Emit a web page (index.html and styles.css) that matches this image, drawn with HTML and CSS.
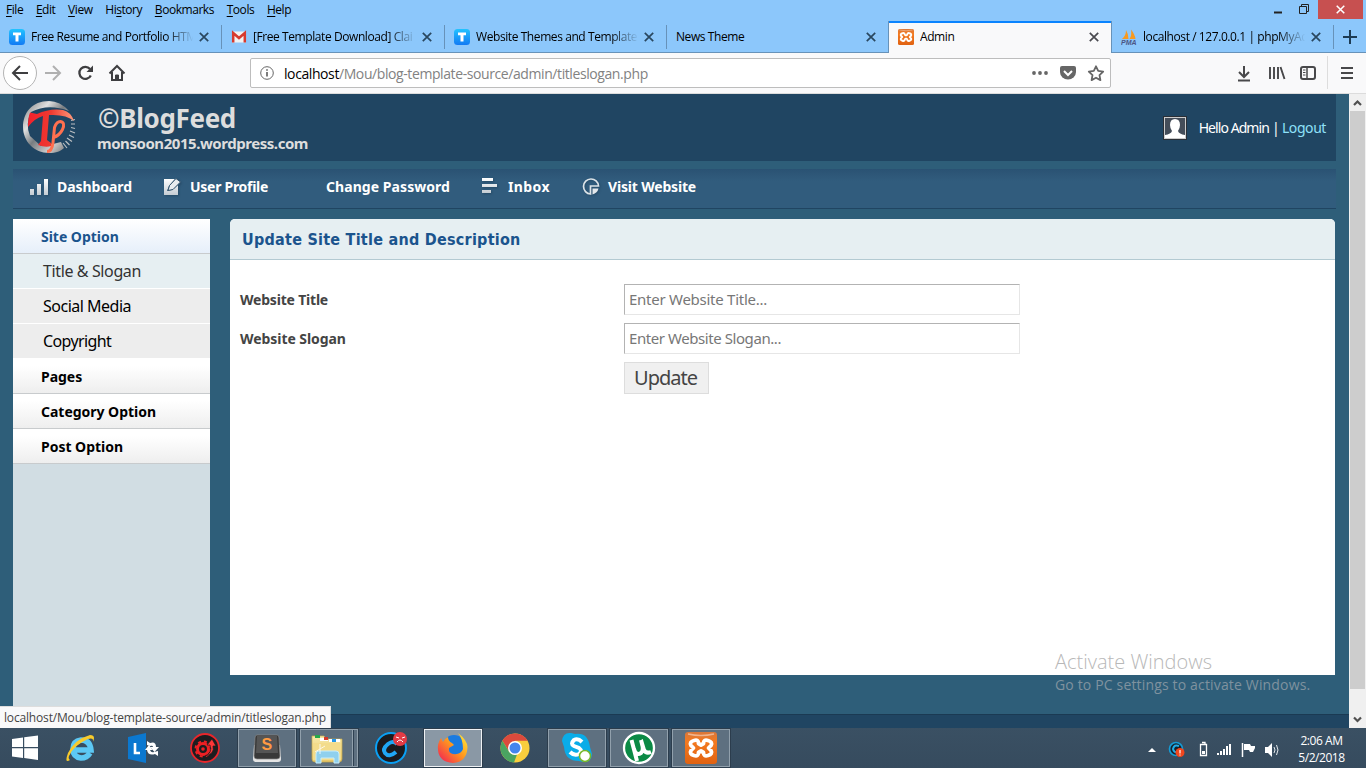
FILE: index.html
```html
<!DOCTYPE html>
<html lang="en">
<head>
<meta charset="utf-8">
<title>Admin</title>
<link rel="stylesheet" href="styles.css">
</head>
<body>
<svg class="defs" width="0" height="0">
  <defs>
    <linearGradient id="cyan" x1="0" y1="0" x2="0" y2="1"><stop offset="0" stop-color="#22c3ff"/><stop offset="1" stop-color="#127af4"/></linearGradient>
    <linearGradient id="steel" x1="0" y1="0" x2="1" y2="1"><stop offset="0" stop-color="#777"/><stop offset=".3" stop-color="#e0e0e0"/><stop offset=".5" stop-color="#777c80"/><stop offset=".75" stop-color="#ccc"/><stop offset="1" stop-color="#666"/></linearGradient>
    <linearGradient id="red" x1="0" y1="0" x2="1" y2="0"><stop offset="0" stop-color="#f3202c"/><stop offset=".5" stop-color="#ee3a30"/><stop offset="1" stop-color="#ff9a7c"/></linearGradient>
    <linearGradient id="pale" x1="0" y1="0" x2="0" y2="1"><stop offset="0" stop-color="#fff"/><stop offset="1" stop-color="#c4ccd3"/></linearGradient>
    <linearGradient id="xo" x1="0" y1="0" x2="0" y2="1"><stop offset="0" stop-color="#d9773a"/><stop offset=".3" stop-color="#f47a20"/><stop offset="1" stop-color="#e06212"/></linearGradient>
    <linearGradient id="folder" x1="0" y1="0" x2="0" y2="1"><stop offset="0" stop-color="#f8eaa8"/><stop offset="1" stop-color="#e5c568"/></linearGradient>
    <linearGradient id="fire" x1="1" y1="0" x2="0" y2="1"><stop offset="0" stop-color="#fff33c"/><stop offset=".45" stop-color="#ff9a1e"/><stop offset="1" stop-color="#f0145a"/></linearGradient>
    <symbol id="x" viewBox="0 0 10 10"><path d="M.8.8l8.400 8.400M9.200.8L.8 9.200" stroke="currentColor" stroke-width="1.700" fill="none"/></symbol>
    <symbol id="t" viewBox="0 0 16 16"><rect width="16" height="16" rx="3.500" fill="url(#cyan)"/><path d="M4 3.500h8v2.700H9.500v6.300h-3V6.200H4z" fill="#fff"/></symbol>
    <symbol id="xampp" viewBox="0 0 32 32"><rect width="32" height="32" rx="3" fill="url(#xo)"/><path d="M3 2q13 3 26 0" stroke="#efb48e" stroke-width="1.500" fill="none"/><path d="M9 8.500Q13.500 7 13.500 11.500L16 13l2.500-1.500Q18.500 7 23 8.500 28 10 26 13.500L23.500 16l2.500 2.500Q28 22 23 23.500 18.500 25 18.500 20.500L16 19l-2.500 1.500Q13.500 25 9 23.500 4 22 6 18.500L8.500 16 6 13.500Q4 10 9 8.500z" fill="none" stroke="#fff" stroke-width="3.800" stroke-linejoin="round"/></symbol>
  </defs>
</svg>

<header class="menubar">
  <nav class="menus"><span><u>F</u>ile</span><span><u>E</u>dit</span><span><u>V</u>iew</span><span>Hi<u>s</u>tory</span><span><u>B</u>ookmarks</span><span><u>T</u>ools</span><span><u>H</u>elp</span></nav>
  <div class="win">
    <svg width="50" height="20"><path d="M6 12.500h8" stroke="#222" stroke-width="2"/><path d="M31.500 6.500h7v7h-7zM33.500 6V4.500h7v7H39" stroke="#222" fill="none"/></svg>
    <span class="close"><svg width="9" height="9"><use href="#x"/></svg></span>
  </div>
</header>

<div class="tabs">
  <div class="tab t1"><svg width="16" height="16"><use href="#t"/></svg><span class="label">Free Resume and Portfolio HTM</span><svg class="x" width="10" height="10"><use href="#x"/></svg></div>
  <div class="tab t2"><svg width="16" height="16" viewBox="0 0 16 16"><path d="M1 2.500h14v11H1z" fill="#f2f2f2"/><path d="M2.200 13.500V4L8 9l5.800-5v9.500" fill="none" stroke="#d63a2f" stroke-width="2.500"/></svg><span class="label">[Free Template Download] Clai</span><svg class="x" width="10" height="10"><use href="#x"/></svg></div>
  <div class="tab t3"><svg width="16" height="16"><use href="#t"/></svg><span class="label">Website Themes and Template</span><svg class="x" width="10" height="10"><use href="#x"/></svg></div>
  <div class="tab t4"><span class="label">News Theme</span><svg class="x" width="10" height="10"><use href="#x"/></svg></div>
  <div class="tab active"><svg width="16" height="16"><use href="#xampp"/></svg><span class="label">Admin</span><svg class="x" width="10" height="10"><use href="#x"/></svg></div>
  <div class="tab t6"><svg width="16" height="16" viewBox="0 0 16 16"><path d="M1 10Q5 7 5 1q2.500 4 2.500 9zM8.500 10Q11 6 10 .5q4 5 4.500 9.500z" fill="#f79a20"/><text x="0" y="15.500" class="pma">PMA</text></svg><span class="label">localhost / 127.0.0.1 | phpMyAd</span><svg class="x" width="10" height="10"><use href="#x"/></svg></div>
  <div class="plus"><svg width="14" height="14"><path d="M7 0v14M0 7h14" stroke="#1d3b54" stroke-width="2"/></svg></div>
</div>

<div class="toolbar">
  <svg width="135" height="40" fill="none" stroke="#3e3e40" stroke-width="2">
    <circle cx="20" cy="20" r="16.500" fill="#fff" stroke="#b4b4b4" stroke-width="1"/>
    <path d="M28 20H13m7-7-7 7 7 7"/>
    <path d="M45 20h15m-7-7 7 7-7 7" stroke="#b0b0b0"/>
    <path d="M90 16a6 6 0 1 0 .8 6.500" stroke-width="2.300"/><path d="M93 12.500v6.500h-6.500z" fill="#3e3e40" stroke="none"/>
    <path d="M109.500 20.500 117 13l7.500 7.500M112 19v8h10v-8"/><path d="M115.500 27v-5h3v5z" fill="#3e3e40" stroke-width="1"/>
  </svg>
  <div class="url">
    <svg width="14" height="14" fill="none" stroke="#666"><circle cx="7" cy="7" r="6.300"/><path d="M7 6v4.500M7 3.300v1.500" stroke-width="1.700"/></svg>
    <span class="addr"><b>localhost</b>/Mou/blog-template-source/admin/titleslogan.php</span>
    <svg width="75" height="18" viewBox="0 0 75 18"><g fill="#666"><circle cx="3" cy="9" r="1.900"/><circle cx="9" cy="9" r="1.900"/><circle cx="15" cy="9" r="1.900"/><path d="M31 2h12q2 0 2 2v4a8 7.500 0 0 1-16 0V4q0-2 2-2z"/></g><path d="M33 7l4 4 4-4" stroke="#fff" stroke-width="2" fill="none"/><path d="M65 2.300l2.200 4.600 5 .7-3.700 3.500.9 5-4.400-2.400-4.400 2.400.9-5-3.700-3.500 5-.7z" fill="none" stroke="#666" stroke-width="1.800" stroke-linejoin="round"/></svg>
  </div>
  <svg class="tools" width="125" height="40" fill="none" stroke="#48484a" stroke-width="2">
    <path d="M9 13v11m-5-5 5 5 5-5M3 27.500h12"/>
    <path d="M35 14v12M39 14v12M43 14v12M45.500 14l4 12" stroke-width="1.900"/>
    <rect x="66" y="14" width="14" height="12" rx="2"/><path d="M72 14v12" stroke-width="1.500"/><path d="M68 17h2.500M68 19.500h2.500M68 22h2.500" stroke-width="1"/>
    <path d="M92.500 3v33" stroke="#ddd" stroke-width="1"/><path d="M106 15h12M106 20h12M106 25h12"/>
  </svg>
</div>

<div class="view">
  <main class="page">
    <div class="brand">
      <svg width="54" height="54" viewBox="0 0 54 54">
        <path fill-rule="evenodd" fill="url(#steel)" d="M27 1C10 1 1 13 1 27s11 26 26 26c7 0 12-2 15-5l-3-6-8 2-12 2L8 36Q3 24 9 12 26 3 47 11 38 1 27 1z"/>
        <path d="M41 43l4 5M43.500 41l4 4M45 38l5 3.500M47 35l5 2.500M48 31l5 2M49 27.500l4 1M49 24h4M49 20.500l4-1" stroke="#b9bec2" stroke-width="1.200"/>
        <path fill="url(#red)" d="M6 27Q6 17 8 12.500L15 14Q28 8 41 10Q49 12 52 21Q44 14 27 15L25 40L29 43V46Q24 48 16 45L19 41L21 16Q13 18 6 27z"/>
        <path d="M25 51.500q5 0 6-9l1.500-15q2-6 6-6 5 1 2 8-3 6-9 8" fill="none" stroke="#ff704f" stroke-width="3"/>
      </svg>
      <div class="titles"><h1>©BlogFeed</h1><p>monsoon2015.wordpress.com</p></div>
      <div class="user"><svg width="24" height="24"><rect x=".5" y=".5" width="23" height="23" fill="#444d59" stroke="#2a2f36"/><rect x="1.500" y="1.500" width="21" height="21" fill="none" stroke="#ccc"/><path d="M2 22v-3q6-1 7-4-2-3-2-6 0-6 5-6t5 6q0 3-2 6 1 3 7 4v3z" fill="#fff"/></svg><span class="hello">Hello Admin</span><span class="bar">|</span><a>Logout</a></div>
    </div>
    <nav class="nav">
      <span class="n1"><svg width="20" height="20" fill="url(#pale)"><path d="M1 12h4v6H1zM8 7h4v11H8zM15 2h4v16h-4z"/></svg>Dashboard</span>
      <span class="n2"><svg width="20" height="20"><path d="M2 2h11L7 9l-2 5 5-1 6-5v10H2z" fill="url(#pale)"/><path d="M6 13.500l1.500-5L14 1.500l4.500 3.500-7.500 7.500z" fill="#e8ecef" stroke="#34556f"/></svg>User Profile</span>
      <span class="n3">Change Password</span>
      <span class="n4"><svg width="20" height="20" fill="url(#pale)"><path d="M3 1h11v3H3zM3 7h15v3H3zM3 13h9v3H3z"/></svg>Inbox</span>
      <span class="n5"><svg width="20" height="20"><path d="M9.500 17A7.500 7.500 0 1 1 17.500 9H9.500z" fill="none" stroke="#dce3e8" stroke-width="1.700"/><path d="M11.500 11.500h6q-1 4.500-6 6z" fill="#e4e8ec"/></svg>Visit Website</span>
    </nav>
    <div class="columns">
      <aside class="side">
        <div class="head on">Site Option</div>
        <div class="sub hover s1">Title &amp; Slogan</div>
        <div class="sub">Social Media</div>
        <div class="sub s3">Copyright</div>
        <div class="head">Pages</div>
        <div class="head">Category Option</div>
        <div class="head">Post Option</div>
      </aside>
      <section class="box">
        <h2>Update Site Title and Description</h2>
        <form class="form">
          <label class="l1">Website Title</label><input class="i1" placeholder="Enter Website Title...">
          <label>Website Slogan</label><input placeholder="Enter Website Slogan...">
          <button type="button">Update</button>
        </form>
      </section>
    </div>
    <footer class="foot"></footer>
  </main>
  <div class="scroll">
    <svg width="17" height="17"><path d="M5 11l3.500-3.500L12 11" stroke="#505050" stroke-width="2.200" fill="none"/></svg>
    <i class="thumb"></i>
    <svg width="17" height="17"><path d="M5 6.500l3.500 3.500L12 6.500" stroke="#505050" stroke-width="2.200" fill="none"/></svg>
  </div>
  <div class="status">localhost/Mou/blog-template-source/admin/titleslogan.php</div>
  <div class="activate"><p class="a1">Activate Windows</p><p class="a2">Go to PC settings to activate Windows.</p></div>
</div>

<footer class="taskbar">
  <div class="start"><svg width="28" height="26"><path d="M1 4l11-1.600V12H1zM13.200 2.200L27 .4V12H13.200zM1 13.200h11v9.700L1 21.500zM13.200 13.200H27V25l-13.800-1.900z" fill="#fff"/></svg></div>
  <div class="app"><svg width="32" height="32" viewBox="0 0 32 32"><path d="M25 21Q22 26 16 26 8 25 8 17T16 8Q25 8 26 18H9" fill="none" stroke="#5cc8f4" stroke-width="5.500"/><path d="M5 28Q-1 32 3 21 10 7 25 3q6 0 3 7 1-5-5-3Q9 13 4 24q-1 3 1 4z" fill="#f8cb2c"/></svg></div>
  <div class="app"><svg width="32" height="32" viewBox="0 0 32 32"><path d="M1 5l18-4v30L1 27z" fill="#0b78d0"/><path d="M8 11v10h5" stroke="#fff" stroke-width="2.600" fill="none"/><path d="M20 13V9l3 2q6-2 6 4h3l-4.500 5-4.500-5h3q0-2-3-1z" fill="#fff"/><path d="M31 19v5l-3-2q-7 2-8-4h-2l4-5 3.500 5H23q1 3 4 2z" fill="#fff"/></svg></div>
  <div class="app"><svg width="32" height="32" viewBox="0 0 32 32"><circle cx="16" cy="16" r="14" fill="#1d1d20" stroke="#e8262b" stroke-width="1.800"/><circle cx="14" cy="17" r="5.500" fill="none" stroke="#ed2024" stroke-width="3"/><circle cx="14" cy="17" r="7.500" fill="none" stroke="#ed2024" stroke-width="2" stroke-dasharray="3 3"/><circle cx="14" cy="17" r="1.800" fill="#ed2024"/><path d="M16 24q8-3 5-11h-3l5-6 4 7h-3q2 8-8 10z" fill="#ff3637" stroke="#1d1d20" stroke-width=".7"/></svg></div>
  <div class="app open"><svg width="32" height="32" viewBox="0 0 32 32"><path d="M3 13h26l1 14q0 3-3 3H5q-3 0-3-3z" fill="#e5e5e5"/><path d="M6 3h20q2 0 2 3l1 18q0 3-3 3H6q-3 0-3-3L4 6q0-3 2-3z" fill="#393939" stroke="#888" stroke-width=".7"/><path d="M6 4h20l1 17H5z" fill="#555"/><text x="10.500" y="18" class="s">S</text></svg></div>
  <div class="app open stack"><svg width="34" height="32" viewBox="0 0 34 32"><path d="M2 4h12l2 3h16v20q0 3-3 3H5q-3 0-3-3z" fill="url(#folder)" stroke="#c7a94c" stroke-width=".7"/><path d="M5 3h5v3H5z" fill="#25a84b"/><path d="M10 6h8v3h-8z" fill="#fff"/><path d="M14 5h4v3h-4z" fill="#d33a2c"/><path d="M19 7h11v3H19z" fill="#fff"/><path d="M22 7h4v3h-4z" fill="#2497e8"/><path d="M3 11h28v17H3z" fill="#f3dc8b"/><path d="M6 31V22q0-3 3-3h17q3 0 3 3v9h-5v-5H11v5z" fill="#8fd0ed" stroke="#c7edfb"/><path d="M5 20l10-6M10 12v10" stroke="#fff" opacity=".8"/></svg></div>
  <div class="app"><svg width="34" height="34" viewBox="0 0 34 34"><circle cx="17" cy="17" r="15" fill="#1b1c20" stroke="#0aa0f5" stroke-width="2"/><path d="M23 13q-4-4-9 0-6 5-3 9 4 5 11-1" fill="none" stroke="#20a7f5" stroke-width="4"/><circle cx="26" cy="8" r="7" fill="#e33b45"/><path d="M22 6l3 1M28 7l3-1M23 11q3-4 6 0" stroke="#fff" fill="none"/></svg></div>
  <div class="app open focus"><svg width="32" height="32" viewBox="0 0 32 32"><circle cx="17" cy="14" r="11" fill="#1b7be0"/><path d="M21 1q9 7 9.500 14Q30 30 16 31 2 30 1 18 0 12 4 6l2 4q2-4 5-5 0 4 4 6l2 2-5 3q-1 5 4 6 8 1 10-5 0-10-5-16z" fill="url(#fire)"/></svg></div>
  <div class="app"><svg width="30" height="30" viewBox="0 0 30 30"><circle cx="15" cy="15" r="14.500" fill="#f9ce3d"/><path d="M2.400 7.800A14.500 14.500 0 0 1 27.600 7.800H15L9 18.500z" fill="#dc4a3d"/><path d="M2.400 7.800L9 18.500q3 4 8 3L14 29.500A14.500 14.500 0 0 1 2.400 7.800z" fill="#4aa461"/><circle cx="15" cy="15" r="7" fill="#fff"/><circle cx="15" cy="15" r="5.500" fill="#4485ee"/></svg></div>
  <div class="app open"><svg width="32" height="32" viewBox="0 0 32 32"><path d="M10 1q-8-1-9 8l2 6q1 14 15 14 12 4 13-7l-2-7Q27 0 14 2z" fill="#0aace8"/><path d="M21 10q-4-4-8-2-4 4 0 6l5 2q4 3 0 6-5 2-9-2" stroke="#fff" stroke-width="4" fill="none"/><circle cx="24" cy="24" r="5.500" fill="#fff" stroke="#78b82a" stroke-width="1.500"/></svg></div>
  <div class="app open"><svg width="34" height="34" viewBox="0 0 34 34"><circle cx="17" cy="17" r="15" fill="#0b8a45" stroke="#fff" stroke-width="2.300"/><path d="M9.500 9l5.500 21M12 18q2 7 7 4 3-3 1-9l-1-4 3 10q2 4 7 2" stroke="#fff" stroke-width="4" fill="none"/></svg></div>
  <div class="app open"><svg width="32" height="32"><use href="#xampp"/></svg></div>
  <div class="tray">
    <svg width="140" height="24" viewBox="0 0 140 24">
      <path d="M4 15l4-4 4 4z" fill="#fff"/>
      <circle cx="32" cy="12" r="6.500" fill="#16222c" stroke="#159bd5" stroke-width="1.700"/><path d="M35 9q-5-2-6 3 1 4 5 3" stroke="#22abe5" stroke-width="2" fill="none"/><circle cx="36" cy="15.500" r="4.500" fill="#f2461d"/><path d="M36 13v3.500M36 17.500v1" stroke="#fff" stroke-width="1.200"/>
      <path d="M56.500 7.500h6v11h-6zM58 5.500h3v2" fill="none" stroke="#fff" stroke-width="1.300"/><path d="M58 14h3v3h-3z" fill="#fff"/>
      <path d="M73 16h2v2h-2zM76 14h2v4h-2zM79 12h2v6h-2zM82 9h2v9h-2zM85 7h2v11h-2z" fill="#fff"/>
      <path d="M98.500 6v14" stroke="#fff" stroke-width="1.500"/><path d="M100 7h6l1 2h4v2l-2 4h-3l-1-2h-5z" fill="#fff"/>
      <path d="M121 10h3l4-4v14l-4-4h-3z" fill="#fff"/><path d="M130 10q2 3 0 6M132.500 8q3 5 0 10" stroke="#e4e8eb" fill="none"/>
    </svg>
    <div class="clock"><span>2:06 AM</span><span>5/2/2018</span></div>
  </div>
</footer>
</body>
</html>
```
FILE: styles.css
```css
* { box-sizing: border-box; margin: 0; }
body { width: 1366px; height: 768px; overflow: hidden; display: flex; flex-direction: column; font-family: "Open Sans", "Noto Sans", sans-serif; font-size: 12px; color: #000; }
svg { flex: none; display: block; }
.defs { position: absolute; }

.menubar { height: 21px; background: #8cc7fb; display: flex; justify-content: space-between; }
.menus { display: flex; gap: 12.7px; padding-left: 6px; line-height: 19px; letter-spacing: -.45px; }
.menus u { text-underline-offset: 2px; }
.win { display: flex; }
.win .close { width: 45px; height: 19px; margin-right: 3px; background: #c75050; color: #fff; display: flex; align-items: center; justify-content: center; }

.tabs { height: 32px; background: #8cc7fb; display: flex; box-shadow: inset 0 -1px #6792b9; }
.tab { display: flex; align-items: center; padding: 0 13px 0 9px; color: #000; }
.tab::after { content: ""; align-self: center; width: 1px; height: 24px; background: #6792b9; margin: 0 -13px 0 12px; }
.label { flex: 1; width: 0; margin-left: 6px; overflow: hidden; white-space: nowrap; letter-spacing: -.42px; line-height: 20px; margin-right: 4px; }
.tab .x { color: #29475f; }
.t1 { width: 222px; }
.t2 { width: 223px; }
.t3 { width: 222px; }
.t4 { width: 221px; }
.t4 .label { margin-left: 0; }
.t4::after, .active::after { display: none; }
.t4, .active { padding-right: 12px; }
.t1 .label, .t2 .label, .t3 .label, .t6 .label { -webkit-mask-image: linear-gradient(90deg, #000 82%, transparent 99%); mask-image: linear-gradient(90deg, #000 82%, transparent 99%); }
.active { width: 224px; background: #f9f9fa; border: solid #6792b9; border-width: 0 1px; box-shadow: inset 0 2px #0a84ff; }
.active .x { color: #4a4a4f; }
.t6 { width: 222px; }
.pma { font: italic bold 7px "Liberation Sans", sans-serif; fill: #4b5585; }
.plus { flex: 1; display: flex; align-items: center; justify-content: center; }

.toolbar { height: 41px; background: #f9f9fa; border-bottom: 1px solid #dcdcdc; display: flex; }
.url { width: 861px; height: 30px; margin: 5px 0 0 115px; border: 1px solid #bdbdbd; border-radius: 2px; background: #fff; display: flex; align-items: center; padding: 0 4px 0 9px; }
.addr { flex: 1; margin-left: 10px; font-size: 14px; letter-spacing: -.41px; color: #828282; padding-top: 1px; }
.addr b { font-weight: 400; color: #000; }
.tools { margin-left: auto; }
.toolbar .tools { margin-right: 6px; }

.view { height: 634px; display: flex; position: relative; background: #2e5e79; font-family: "Noto Sans", sans-serif; }
.page { width: 1349px; display: flex; flex-direction: column; }
.brand { height: 67px; margin: 0 13px; background: #204562; display: flex; align-items: center; padding: 0 10px 2px 9px; color: #ddd; }
.titles { margin-left: 21px; padding-top: 3px; }
.titles h1 { font-size: 26px; line-height: 30px; letter-spacing: -.35px; padding-left: 1px; }
.titles p { font-size: 15px; font-weight: 700; line-height: 21px; letter-spacing: -.45px; }
.user { margin-left: auto; display: flex; align-items: center; font-size: 14px; color: #fff; padding-top: 2px; }
.hello { margin-left: 12px; letter-spacing: -.93px; }
.bar { margin: 0 3px 0 3px; width: 7px; text-align: center; }
.user a { color: #8fe1f9; letter-spacing: -.42px; }
.nav { height: 40px; margin: 8px 13px 0; background: linear-gradient(#2a5273, #315c7d 12px); border-bottom: 1px solid #204562; display: flex; align-items: center; padding: 0 0 4px 16px; font-size: 14px; font-weight: 700; color: #fff; }
.nav span { display: flex; align-items: center; white-space: nowrap; gap: 8px; }
.nav svg { filter: drop-shadow(1px 1px 1px #1a3a5388); }
.n1 { width: 133px; letter-spacing: -.06px; }
.n2 { width: 164px; letter-spacing: -.28px; }
.n3 { width: 153px; letter-spacing: .06px; }
.nav .n4 { width: 102px; letter-spacing: .4px; gap: 9px; }
.nav .n5 { letter-spacing: -.18px; gap: 7px; }
.columns { height: 505px; padding: 10px 14px 0 13px; display: flex; gap: 20px; }
.side { width: 197px; background: #d1dde3; }
.head { height: 35px; padding-left: 28px; border-bottom: 1px solid #c8cbcd; background: linear-gradient(#fff 20%, #eee); font-size: 14px; font-weight: 700; line-height: 36px; letter-spacing: -.02px; }
.head.on { color: #1b548d; background: linear-gradient(#fff, #e6effa); }
.sub { height: 35px; padding-left: 30px; background: #ededed; border-bottom: 1px solid #fff; font-size: 16px; line-height: 34px; letter-spacing: -.5px; }
.sub.hover { color: #333; background: #e6eff2; }
.s1 { letter-spacing: -.38px; }
.s3 { letter-spacing: -.63px; }
.box { flex: 1; height: 456px; background: #fff; border-radius: 5px 5px 0 0; overflow: hidden; }
.box h2 { height: 41px; padding: 1px 0 0 12px; background: #e6eff2; border-bottom: 1px solid #b3cad2; font: 700 16px/40px "DejaVu Sans Condensed", "DejaVu Sans", sans-serif; font-stretch: condensed; letter-spacing: .25px; color: #1b548d; }
.form { display: grid; grid-template-columns: 384px 396px; grid-auto-rows: 31px; row-gap: 8px; padding: 24px 10px; }
.form label { font-size: 14px; font-weight: 700; line-height: 31px; letter-spacing: -.06px; color: #444; }
.form .l1 { letter-spacing: -.2px; }
.form input { width: 396px; height: 31px; border: 1px solid; border-color: #b3b3b3 #e6e6e6 #e6e6e6 #b3b3b3; padding: 0 4px 2px; font: 15px "Noto Sans", sans-serif; letter-spacing: -.43px; }
.form .i1 { letter-spacing: -.26px; }
.form input::placeholder { color: #777; }
.form button { grid-column: 2; width: 85px; height: 32px; padding: 0 2px 0 0; border: 1px solid #ddd; background: #f0f0f0; color: #444; font: 20px/30px "Noto Sans", sans-serif; letter-spacing: -1px; }
.foot { height: 14px; margin-top: auto; background: #204562; border-top: 1px solid #1b3a53; }
.scroll { width: 17px; background: #f0f0f0; display: flex; flex-direction: column; }
.thumb { width: 15px; height: 578px; margin: 0 1px auto; background: #cdcdcd; }
.status { position: absolute; left: 0; bottom: 0; width: 331px; height: 22px; padding-left: 4px; background: #f9f9fa; border: solid #ddd; border-width: 1px 1px 0 0; font: 12px/22px "Open Sans", sans-serif; letter-spacing: -.17px; color: #444; white-space: nowrap; }
.activate { position: absolute; left: 1055px; top: 555px; font-family: "Open Sans", sans-serif; font-weight: 300; white-space: nowrap; }
.a1 { font-size: 20px; line-height: 26px; color: #b8b8b8; }
.a2 { font-size: 14px; line-height: 20px; font-weight: 400; letter-spacing: .16px; color: #7f929f; }

.taskbar { height: 40px; background: linear-gradient(#3a5063, #364b5e); display: flex; align-items: flex-start; }
.start { width: 52px; height: 40px; display: flex; align-items: center; justify-content: center; padding: 0 2px 1px 0; }
.app { width: 58px; height: 38px; margin: 1px 4px 0 0; display: flex; align-items: center; justify-content: center; border: 1px solid transparent; }
.app.open { background: #5e7080; border-color: #91a0ac; box-shadow: 0 0 0 1px #2c3d4d; }
.app.focus { background: #8a98a5; border-color: #eef1f4; }
.app.stack { padding-right: 5px; background: linear-gradient(90deg, #5e7080 51px, #91a0ac 51px 52px, #2f4152 52px 53px, #5e7080 53px); }
.s { font: bold 16px "Liberation Sans", sans-serif; fill: #ff9b42; }
.tray { margin-left: auto; display: flex; padding-right: 21px; gap: 14px; align-items: center; height: 41px; color: #fff; }
.clock { display: flex; flex-direction: column; align-items: center; line-height: 17px; letter-spacing: -.45px; width: 47px; }
```
